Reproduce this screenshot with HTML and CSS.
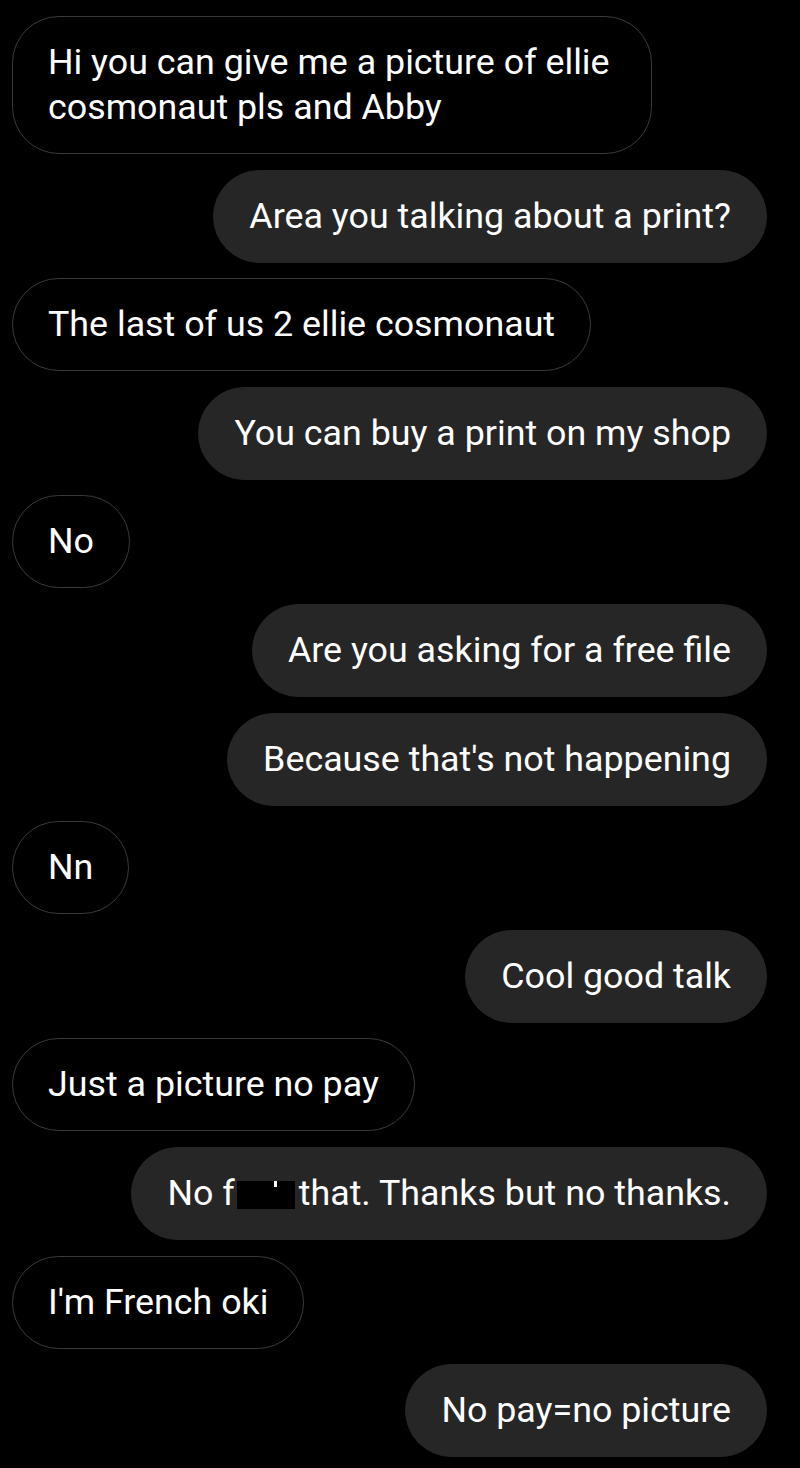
FILE: index.html
```html
<!DOCTYPE html>
<html>
<head>
<meta charset="utf-8">
<link rel="stylesheet" href="styles.css">
</head>
<body>
<div class="chat">
  <div class="msg in">Hi you can give me a picture of ellie cosmonaut pls and Abby</div>
  <div class="msg out">Area you talking about a print?</div>
  <div class="msg in">The last of us 2 ellie cosmonaut</div>
  <div class="msg out">You can buy a print on my shop</div>
  <div class="msg in">No</div>
  <div class="msg out">Are you asking for a free file</div>
  <div class="msg out">Because that's not happening</div>
  <div class="msg in">Nn</div>
  <div class="msg out">Cool good talk</div>
  <div class="msg in">Just a picture no pay</div>
  <div class="msg out nowrap">No f<span class="redact"></span>that. Thanks but no thanks.</div>
  <div class="msg in">I'm French oki</div>
  <div class="msg out">No pay=no picture</div>
</div>
</body>
</html>
```

FILE: styles.css
```css
html, body {
  margin: 0;
  background: #000;
}
body {
  font-family: Roboto, "Noto Sans", sans-serif;
  color: #fff;
}
.chat {
  display: flex;
  flex-direction: column;
  gap: 15.6px;
  padding: 16px 33px 10px 12px;
}
.msg {
  max-width: 640px;
  box-sizing: border-box;
  padding: 23px 35px;
  font-size: 35.8px;
  line-height: 45px;
  border-radius: 47px;
  border: 1px solid transparent;
}
.msg.in {
  align-self: flex-start;
  border-color: #3a3a3a;
  background: #000;
}
.msg.out {
  align-self: flex-end;
  background: #262626;
  border-color: #262626;
}
.nowrap {
  white-space: nowrap;
  max-width: none;
}
.redact {
  position: relative;
  display: inline-block;
  width: 58px;
  height: 28px;
  margin: 0 4px 0 2px;
  background: #000;
  vertical-align: -4px;
}
.redact::after {
  content: "";
  position: absolute;
  left: 37px;
  top: 0;
  width: 3px;
  height: 6px;
  background: #fff;
}
```
